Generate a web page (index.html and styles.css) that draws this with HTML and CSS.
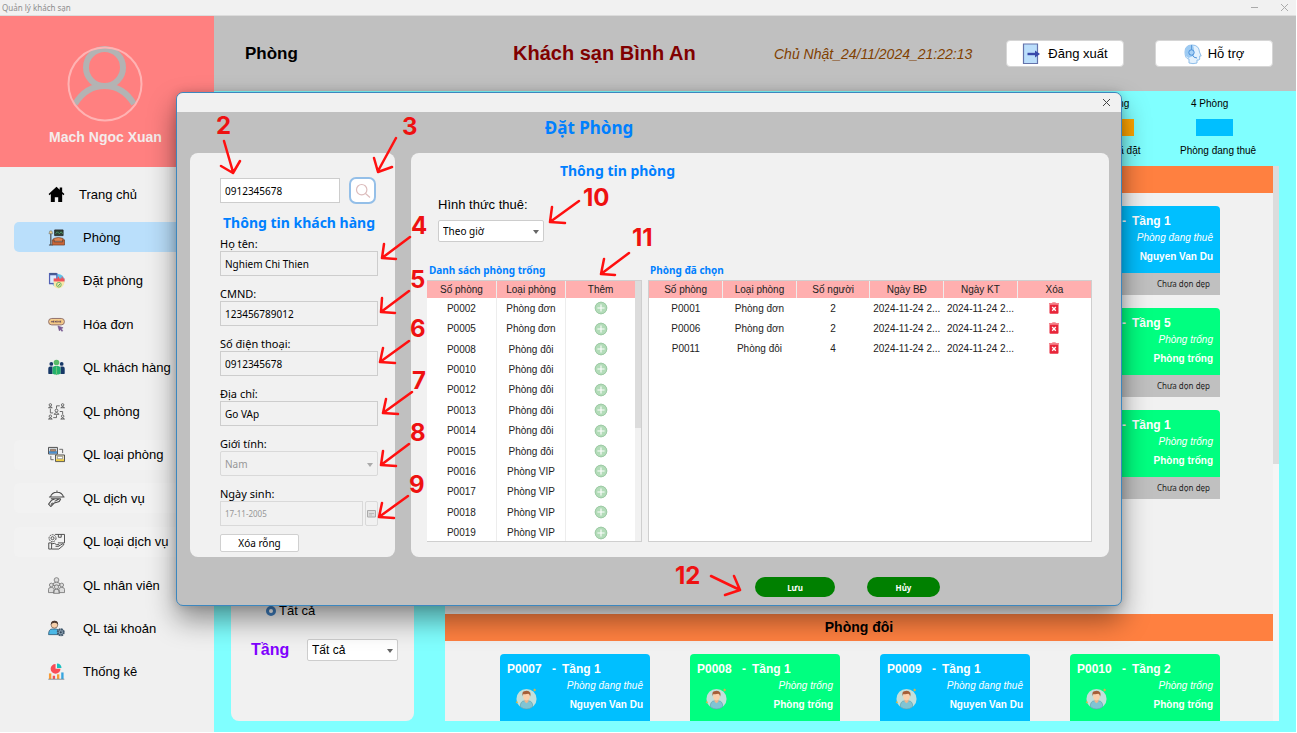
FILE: index.html
```html
<!DOCTYPE html>
<html lang="vi">
<head>
<meta charset="utf-8">
<title>Quản lý khách sạn</title>
<link rel="stylesheet" href="styles.css">
</head>
<body>
<svg class="sprite" aria-hidden="true">
  <symbol id="add" viewBox="0 0 14 14"><circle cx="7" cy="7" r="6.2" fill="#b3dcb9"/><circle cx="7" cy="7" r="5.8" fill="none" stroke="#9fcba6"/><path d="M7 3.4v7.2M3.4 7h7.2" stroke="#fff" stroke-width="1.1"/></symbol>
  <symbol id="trash" viewBox="0 0 10 12"><path d="M.5 2.2h9v8.6q0 .9-.9.9H1.4q-.9 0-.9-.9z" fill="#e8263a"/><path d="M0 1.1h3L3.6.2h2.8l.6.9h3v1.3H0z" fill="#f4808a"/><path d="M3.2 5l3.6 3.8M6.8 5L3.2 8.8" stroke="#fff" stroke-width="1.3"/></symbol>
  <symbol id="guest" viewBox="0 0 24 24"><circle cx="12" cy="12.5" r="10.5" fill="#c2e0dc"/><path d="M5.5 20.5q0-6 4.5-6h4q4.500 0 4.500 6-3 2.500-6.500 2.500t-6.500-2.500z" fill="#7fc4d4" stroke="#5aa0ae" stroke-width=".7"/><path d="M10 12h4v3.500l-2 1.500-2-1.500z" fill="#efb78e"/><ellipse cx="12" cy="9.500" rx="3.500" ry="4.500" fill="#fbd0ac"/><path d="M8 10q-1-5 1.500-5.500Q14 2.800 16 6q.5 2-.2 4-.3-2.500-1.800-3-3 .8-5 .3Q8 8 8 10z" fill="#a65f38"/><path d="M20.500 1.500l1.600 1.600-1.600 1.600-1.600-1.600zM2 14.500l1.300 1.300L2 17.100.7 15.800z" fill="#d8b64a"/></symbol>
</svg>

<div class="app">
  <div class="titlebar">
    <span>Quản lý khách sạn</span>
    <div class="win-buttons">
      <button aria-label="Thu nhỏ"><svg width="9" height="9" viewBox="0 0 9 9"><path d="M1 4.500h7" stroke="#aaa"/></svg></button>
      <button aria-label="Đóng"><svg width="9" height="9" viewBox="0 0 9 9"><path d="M1 1l7 7M8 1L1 8" stroke="#aaa"/></svg></button>
    </div>
  </div>

  <div class="shell">
    <aside class="sidebar">
      <div class="profile">
        <svg width="76" height="76" viewBox="0 0 76 76" fill="none"><g stroke="#b3b3b3" stroke-width="6"><circle cx="37.500" cy="21.500" r="18.500"/><path d="M8 58Q19 40 37.500 40T67 58"/></g><circle cx="38" cy="38" r="36.500" stroke="#ffb3b3" stroke-width="2"/></svg>
        <strong>Mach Ngoc Xuan</strong>
      </div>
      <nav class="menu">
        <a href="#" class="home"><svg viewBox="0 0 18 18"><path d="M9 .8L.6 8.600l1 1.200L3 8.600V17h4.200v-5h3.600v5H15V8.600l1.400 1.200 1-1.200L15 6.300V1.500h-2.600v2.400z"/></svg>Trang chủ</a>
        <a href="#" class="active"><svg viewBox="0 0 18 18"><path d="M7 1h9v6H7z" fill="#2e4237" stroke="#222" stroke-width=".8"/><path d="M8 5l2-2 2 2 2-2 1.500 2" stroke="#54a070" fill="none"/><path d="M1 5l1-3h2l1 3z" fill="#f1d18a" stroke="#555" stroke-width=".5"/><path d="M3 5v12M1 17h4" stroke="#444" stroke-width="1.200"/><path d="M6 10q5-2 10 0v3H6z" fill="#e08450" stroke="#693b25" stroke-width=".7"/><path d="M4.500 11.500h2v2.200h9v-2.200h2V17h-13z" fill="#c96537" stroke="#693b25" stroke-width=".7"/></svg>Phòng</a>
        <a href="#"><svg viewBox="0 0 18 18"><circle cx="10.500" cy="9" r="7" fill="#5fc4ea"/><path d="M1 1h9v12H1z" fill="#5361b5"/><path d="M2.300 3.500h6.400v8H2.300z" fill="#dcebff"/><path d="M2 1h7v2H2z" fill="#46598f"/><path d="M6 9h11.500q0 7.500-6.500 8.500-5-1-5-4z" fill="#f9e7a7"/><path d="M6 6.800h11.500V10H6z" fill="#f0525b"/><path d="M11 5v3m4-3v3" stroke="#f0525b" stroke-width="1.300"/><circle cx="11.500" cy="13.500" r="2.500" fill="none" stroke="#66b66b"/><path d="M10.500 13.500l.8.9 1.500-1.800" stroke="#499c50" fill="none"/></svg>Đặt phòng</a>
        <a href="#"><svg viewBox="0 0 18 18"><rect x=".6" y="2.600" width="16.800" height="6.800" rx="3.400" fill="#f6cf91" stroke="#8c6b68"/><rect x="2.500" y="4.200" width="13" height="3.600" rx="1.800" fill="#eabd79"/><path d="M3.500 6h1.500m1-1v2m1.500-1h1m1-1v2m1.500-1h1m1-1v2" stroke="#5f4a60" stroke-width="1.200"/><path d="M10.500 10.500l5.500 2-2 .9 1.700 2.100-1 .8-1.700-2.100-1 1.600z" fill="#7a5a9b" stroke="#684a80" stroke-width=".5"/></svg>Hóa đơn</a>
        <a href="#"><svg viewBox="0 0 18 18"><g fill="#173867"><circle cx="3.500" cy="5.200" r="2"/><circle cx="14.500" cy="5.200" r="2"/><path d="M.3 15V10q0-2 2-2h2.500v8H1.500q-1.200 0-1.200-1zM17.700 15V10q0-2-2-2h-2.500v8h3.300q1.200 0 1.200-1z"/></g><circle cx="9" cy="3.700" r="3" fill="#59bb68"/><path d="M4.800 15.500V10q0-2.700 2.800-2.700h2.800q2.800 0 2.800 2.700v5.500q-4.200 2-8.400 0z" fill="#24b06c"/><path d="M9 8v9" stroke="#65c574" stroke-width="1.200"/></svg>QL khách hàng</a>
        <a href="#"><svg viewBox="0 0 18 18" fill="none" stroke="#555" stroke-width=".9"><circle cx="2.500" cy="2" r="1.300"/><path d="M.5 5q2-2.500 4 0z"/><circle cx="15.500" cy="2" r="1.300"/><path d="M13.500 5q2-2.500 4 0z"/><circle cx="9" cy="8" r="1.500"/><path d="M6.500 12q2.500-4 5 0z"/><circle cx="2.500" cy="14" r="1.300"/><path d="M.5 17q2-2.500 4 0z"/><circle cx="15.500" cy="14" r="1.300"/><path d="M13.500 17q2-2.500 4 0zM2.500 6v4.500h3M12.500 3H9v3M15.500 12V9h-3M5.500 15.500H9V13"/></svg>QL phòng</a>
        <a href="#" class="soft"><svg viewBox="0 0 18 18"><path d="M.5 1.500h9.500v7H.5z" fill="#dbe1e5" stroke="#4a4a4a"/><path d="M1 5.500h8.500V8H1z" fill="#4b8fd0"/><path d="M2.500 3.500h5.500v2H2.500z" fill="#c6906c" stroke="#444" stroke-width=".5"/><path d="M8 9.500h9.500v7H8z" fill="#f2e9c8" stroke="#4a4a4a"/><path d="M8.500 14h8.500v2H8.500z" fill="#f0ce42"/><path d="M10 11h5.500v2.500H10z" fill="#fff" stroke="#444" stroke-width=".5"/><path d="M12 3.500h3.500v4M3 10.500v4h3" fill="none" stroke="#555" stroke-width=".9"/></svg>QL loại phòng</a>
        <a href="#" class="soft"><svg viewBox="0 0 18 18" fill="none" stroke="#4a4a4a" stroke-width="1.100"><path d="M2.500 7.500Q4 2.300 9.500 2.300T16.500 7.500M1 7.500h16.500M9.500 2V.6M3 9.300h10.500M13.500 9.500q-1 3-4 3.500l-3 .8L3 17.500.6 15l3-4 3.400-1.500M7 12l4.500-2.500M3 15.500l2-2"/></svg>QL dịch vụ</a>
        <a href="#" class="soft"><svg viewBox="0 0 18 18" fill="none" stroke="#4a4a4a"><path d="M7.500 1.500h10v9h-7M11 1.500v3h3v-3"/><circle cx="4.800" cy="5.500" r="3.700" stroke-dasharray="2 .7"/><circle cx="4.800" cy="5.500" r="1.600"/><path d="M.8 10.500h3v6.500h-3zM4 11.500q3-1.500 5 .8h2.500q1 1-.2 1.800H8m3.500-.3l4.300-2.500q1.500.4.700 1.500L11.500 17H4"/></svg>QL loại dịch vụ</a>
        <a href="#"><svg viewBox="0 0 18 18" fill="#ddd" stroke="#777" stroke-width=".9"><circle cx="9" cy="3.200" r="2.500"/><path d="M5 9q0-3.500 4-3.500T13 9z"/><circle cx="3.500" cy="8.500" r="2"/><circle cx="14.500" cy="8.500" r="2"/><circle cx="9" cy="10.500" r="2.200"/><path d="M.5 16.500V13q0-2 3-2t3 2v3.500zM11.500 16.500V13q0-2 3-2t3 2v3.500zM5.800 17.300v-2q0-2.300 3.200-2.300t3.200 2.300v2z"/></svg>QL nhân viên</a>
        <a href="#"><svg viewBox="0 0 18 18"><path d="M.6 15.500q0-6 4-6h4q3.500 0 4 4v2z" fill="#4cb8e6" stroke="#2a536e" stroke-width=".8"/><circle cx="6.800" cy="5" r="3.600" fill="#f6cfaa" stroke="#514036" stroke-width=".6"/><path d="M3 5Q3 .7 7 .8T10.600 5Q9.500 2.800 7 2.800T3 5z" fill="#4d3a31"/><circle cx="13.500" cy="13" r="3.200" fill="#93a7b7" stroke="#40576b" stroke-width="2" stroke-dasharray="1.900 .6"/><circle cx="13.500" cy="13" r="1.200" fill="#33475a"/></svg>QL tài khoản</a>
        <a href="#"><svg viewBox="0 0 18 18"><path d="M8 1a5.200 5.200 0 1 0 5.200 5.200H8z" fill="#fa4c56"/><path d="M9.500.5a5 5 0 0 1 4.800 4.800H9.500z" fill="#1bc0c0"/><path d="M1 11h2.500v6H1z" fill="#f99b35"/><path d="M5 13.500h2.500V17H5z" fill="#f25058"/><path d="M9.500 12H12v5H9.500z" fill="#f99b35"/><path d="M14 10h2.500v7H14z" fill="#37a5df"/><path d="M.3 17.200h17" stroke="#7c8790" stroke-width=".9"/></svg>Thống kê</a>
      </nav>
    </aside>

    <main class="main">
      <header class="header">
        <h1>Phòng</h1>
        <p class="hotel">Khách sạn Bình An</p>
        <time>Chủ Nhật_24/11/2024_21:22:13</time>
        <div class="account">
          <button class="hbtn"><svg width="20" height="22" viewBox="0 0 20 22"><path d="M1.500 1h14v19.500h-14z" fill="#bbdefb" stroke="#6473ab" stroke-width="1.200"/><path d="M5.500 11h9" stroke="#3949ab" stroke-width="2.400"/><path d="M13 7.500l5 3.500-5 3.500z" fill="#3949ab"/></svg>Đăng xuất</button>
          <button class="hbtn"><svg width="18" height="22" viewBox="0 0 18 22"><path d="M8 2Q1 2 1 9t4 7v4q4 1.300 8 0v-3h2q1-.5.700-2V13h1.500L15.500 9Q15 2 8 2z" fill="#e3f1fd" stroke="#84b8e8" stroke-width=".9"/><path d="M8 2Q1 2 1 9.500q.5 4 3.500 5.500L9 13q2-5 0-11z" fill="#9dcbf3"/><path d="M7.500 2v6" stroke="#5e9ddc"/><circle cx="7.500" cy="9.500" r="2.700" fill="#a8d1f6" stroke="#4a90d9"/><path d="M8.500 12q1 3 4.500 3" stroke="#4a90d9" fill="none"/></svg>Hỗ trợ</button>
        </div>
      </header>

      <div class="workspace">
        <section class="filters">
          <label class="radio"><input type="radio" name="status" checked>Tất cả</label>
          <div class="floor">
            <label for="floor">Tầng</label>
            <span class="select"><select id="floor"><option>Tất cả</option></select></span>
          </div>
        </section>

        <section class="rooms">
          <div class="legend">
            <div><span class="count">1 Phòng</span><i class="booked"></i><span>Phòng đã đặt</span></div>
            <div><span class="count">4 Phòng</span><i class="rented"></i><span>Phòng đang thuê</span></div>
          </div>
          <div class="viewport">
            <div class="groups">
              <div class="group-bar"></div>
              <div class="cards first">
                <article class="card busy"><div class="face"><h3><b></b><span>-</span>Tầng 1</h3><em>Phòng đang thuê</em><strong>Nguyen Van Du</strong></div><footer>Chưa dọn dẹp</footer></article>
                <article class="card"><div class="face"><h3><b></b><span>-</span>Tầng 5</h3><em>Phòng trống</em><strong>Phòng trống</strong></div><footer>Chưa dọn dẹp</footer></article>
                <article class="card"><div class="face"><h3><b></b><span>-</span>Tầng 1</h3><em>Phòng trống</em><strong>Phòng trống</strong></div><footer>Chưa dọn dẹp</footer></article>
              </div>
              <h2 class="group-bar">Phòng đôi</h2>
              <div class="cards">
                <article class="card busy"><div class="face"><h3><b>P0007</b><span>-</span>Tầng 1</h3><svg class="guest"><use href="#guest"/></svg><em>Phòng đang thuê</em><strong>Nguyen Van Du</strong></div><footer></footer></article>
                <article class="card"><div class="face"><h3><b>P0008</b><span>-</span>Tầng 1</h3><svg class="guest"><use href="#guest"/></svg><em>Phòng trống</em><strong>Phòng trống</strong></div><footer></footer></article>
                <article class="card busy"><div class="face"><h3><b>P0009</b><span>-</span>Tầng 1</h3><svg class="guest"><use href="#guest"/></svg><em>Phòng đang thuê</em><strong>Nguyen Van Du</strong></div><footer></footer></article>
                <article class="card"><div class="face"><h3><b>P0010</b><span>-</span>Tầng 2</h3><svg class="guest"><use href="#guest"/></svg><em>Phòng trống</em><strong>Phòng trống</strong></div><footer></footer></article>
              </div>
            </div>
            <div class="track"><div class="thumb"></div></div>
          </div>
        </section>
      </div>
    </main>
  </div>
</div>

<div class="dialog" role="dialog" aria-labelledby="dlg-title">
  <div class="dialog-bar"><button aria-label="Đóng hộp thoại"><svg width="9" height="9" viewBox="0 0 9 9"><path d="M1 1l7 7M8 1L1 8" stroke="#444"/></svg></button></div>
  <h2 id="dlg-title">Đặt Phòng</h2>
  <div class="dialog-body">
    <form class="panel customer">
      <div class="search">
        <input type="text" value="0912345678" aria-label="Tìm khách hàng">
        <button type="button" aria-label="Tìm"><svg width="16" height="16" viewBox="0 0 16 16" fill="none" stroke="#dcbcbc" stroke-width="1.200"><circle cx="6.700" cy="6.700" r="5.200"/><path d="M10.500 10.500l4.500 4"/></svg></button>
      </div>
      <h3>Thông tin khách hàng</h3>
      <div class="field"><label for="name">Họ tên:</label><input id="name" type="text" value="Nghiem Chi Thien" readonly></div>
      <div class="field"><label for="idno">CMND:</label><input id="idno" type="text" value="123456789012" readonly></div>
      <div class="field"><label for="phone">Số điện thoại:</label><input id="phone" type="text" value="0912345678" readonly></div>
      <div class="field"><label for="addr">Địa chỉ:</label><input id="addr" type="text" value="Go VAp" readonly></div>
      <div class="field"><label for="sex">Giới tính:</label><span class="select off"><select id="sex" disabled><option>Nam</option></select></span></div>
      <div class="field"><label for="dob">Ngày sinh:</label>
        <div class="date"><input id="dob" type="text" value="17-11-2005" disabled><button type="button" disabled aria-label="Chọn ngày"><svg width="9" height="8" viewBox="0 0 9 8"><path d="M.5.5h8v6.500h-8z" fill="#ddd" stroke="#aaa"/><path d="M2 3.500h5M2 5h3" stroke="#bbb"/></svg></button></div></div>
      <button type="button" class="clear">Xóa rỗng</button>
    </form>

    <section class="panel booking">
      <h3>Thông tin phòng</h3>
      <div class="rent">
        <label for="rent">Hình thức thuê:</label>
        <span class="select"><select id="rent"><option>Theo giờ</option></select></span>
      </div>
      <div class="tables">
        <div class="tbl">
          <h4>Danh sách phòng trống</h4>
          <div class="frame">
            <table class="free">
              <thead><tr><th>Số phòng</th><th>Loại phòng</th><th>Thêm</th></tr></thead>
              <tbody>
                <tr><td>P0002</td><td>Phòng đơn</td><td><svg><use href="#add"/></svg></td></tr>
                <tr><td>P0005</td><td>Phòng đơn</td><td><svg><use href="#add"/></svg></td></tr>
                <tr><td>P0008</td><td>Phòng đôi</td><td><svg><use href="#add"/></svg></td></tr>
                <tr><td>P0010</td><td>Phòng đôi</td><td><svg><use href="#add"/></svg></td></tr>
                <tr><td>P0012</td><td>Phòng đôi</td><td><svg><use href="#add"/></svg></td></tr>
                <tr><td>P0013</td><td>Phòng đôi</td><td><svg><use href="#add"/></svg></td></tr>
                <tr><td>P0014</td><td>Phòng đôi</td><td><svg><use href="#add"/></svg></td></tr>
                <tr><td>P0015</td><td>Phòng đôi</td><td><svg><use href="#add"/></svg></td></tr>
                <tr><td>P0016</td><td>Phòng VIP</td><td><svg><use href="#add"/></svg></td></tr>
                <tr><td>P0017</td><td>Phòng VIP</td><td><svg><use href="#add"/></svg></td></tr>
                <tr><td>P0018</td><td>Phòng VIP</td><td><svg><use href="#add"/></svg></td></tr>
                <tr><td>P0019</td><td>Phòng VIP</td><td><svg><use href="#add"/></svg></td></tr>
              </tbody>
            </table>
            <div class="track"><div class="thumb"></div></div>
          </div>
        </div>
        <div class="tbl">
          <h4>Phòng đã chọn</h4>
          <div class="frame">
            <table class="picked">
              <thead><tr><th>Số phòng</th><th>Loại phòng</th><th>Số người</th><th>Ngày BĐ</th><th>Ngày KT</th><th>Xóa</th></tr></thead>
              <tbody>
                <tr><td>P0001</td><td>Phòng đơn</td><td>2</td><td>2024-11-24 2...</td><td>2024-11-24 2...</td><td><svg><use href="#trash"/></svg></td></tr>
                <tr><td>P0006</td><td>Phòng đơn</td><td>2</td><td>2024-11-24 2...</td><td>2024-11-24 2...</td><td><svg><use href="#trash"/></svg></td></tr>
                <tr><td>P0011</td><td>Phòng đôi</td><td>4</td><td>2024-11-24 2...</td><td>2024-11-24 2...</td><td><svg><use href="#trash"/></svg></td></tr>
              </tbody>
            </table>
          </div>
        </div>
      </div>
    </section>
  </div>
  <div class="actions"><button class="save">Lưu</button><button>Hủy</button></div>
</div>

<svg class="notes" width="1297" height="733" viewBox="0 0 1297 733">
  <g>
    <text x="216" y="134">2</text><text x="402" y="135">3</text><text x="411" y="234">4</text><text x="410" y="288">5</text>
    <text x="410" y="337">6</text><text x="412" y="389">7</text><text x="410" y="441">8</text><text x="409" y="493">9</text>
    <text x="583" y="206">10</text><text x="632" y="246">11</text><text x="675" y="584">12</text>
  </g>
  <path d="M224 141L233 172M221 166L233 173L240 161M396 138L378 171M374 158L378 172L392 167M410 237L382 258M384 244L382 258L396 259M409 291L381 312M382 298L381 312L395 313M409 341L380 362M383 348L380 362L395 363M412 392L383 413M386 399L383 413L398 414M409 444L381 465M383 451L381 465L396 466M408 496L379 517M382 503L379 517L394 518M579 201L550 222M552 207L550 222L565 223M629 253L601 274M604 259L601 274L615 275M711 576L740 590M734 576L740 590L725 595"/>
</svg>
</body>
</html>
```
FILE: styles.css
```css
* { box-sizing: border-box; }
body {
  margin: 0;
  position: relative;
  background: #fff;
  color: #000;
  font: 13px "Liberation Sans", Arial, sans-serif;
  overflow: hidden;
}
h1, h2, h3, h4, p { margin: 0; }
button, input, select { font: inherit; color: inherit; margin: 0; }
button { padding: 0; border: 0; background: none; }
a { color: inherit; text-decoration: none; }
.sprite { position: absolute; width: 0; height: 0; }

.app { height: 100vh; padding: 0 1px 1px 0; display: flex; flex-direction: column; }
.titlebar {
  height: 16px; flex: none; padding: 0 7px 0 2px;
  display: flex; align-items: center; justify-content: space-between;
  background: #f1f1f1; border-bottom: 1px solid #dcdcdc;
  color: #8d8d8d; font: 8px "Noto Sans", sans-serif;
}
.win-buttons { display: flex; gap: 21px; }
.win-buttons button { display: flex; }
.shell { flex: 1; min-height: 0; display: flex; }

.sidebar { width: 214px; flex: none; background: #f0f0f0; }
.profile {
  height: 151px; padding: 30px 0 0; background: #ff8080;
  display: flex; flex-direction: column; align-items: center; gap: 6px;
}
.profile svg { margin-right: 5px; }
.profile strong { color: #f4ecec; font-size: 14px; line-height: 18px; margin-right: 3px; }
.menu { height: 508px; margin: 12px 14px 0; display: flex; flex-direction: column; justify-content: space-between; }
.menu a { height: 30px; padding-left: 34px; border-radius: 5px; display: flex; align-items: center; gap: 18px; }
.menu svg { width: 17px; height: 17px; flex: none; }
.menu .home { gap: 14px; }
.menu .active { background: #badffb; }
.menu .soft { background: #f2f2f2; }

.main { flex: 1; min-width: 0; display: flex; flex-direction: column; background: #80ffff; }
.header {
  height: 75px; flex: none; padding: 0 23px 0 31px; background: #c0c0c0;
  display: grid; grid-template-columns: 268px 261px 1fr auto; align-items: center;
}
.header h1 { font-size: 17px; }
.header .hotel { color: #800000; font-size: 20px; font-weight: bold; }
.header time { color: #804000; font-size: 14px; font-style: italic; }
.account { display: flex; gap: 31px; }
.hbtn {
  width: 118px; height: 27px; border-radius: 4px; background: #fff; border: 1px solid #d6d6d6;
  display: flex; align-items: center; justify-content: center; gap: 6px;
}

.workspace { flex: 1; min-height: 0; padding: 0 17px 11px; display: flex; gap: 31px; }
.filters {
  width: 183px; flex: none; margin-top: 10px; padding: 0 16px 60px 20px;
  background: #f1f1f1; border-radius: 8px;
  display: flex; flex-direction: column; justify-content: flex-end; gap: 19px;
}
.radio { display: flex; align-items: center; gap: 3px; padding-left: 15px; line-height: 18px; }
.radio input { appearance: none; width: 10px; height: 10px; border: 3px solid #3f7fc0; border-radius: 50%; background: #fff; }
.floor { display: flex; align-items: center; justify-content: space-between; }
.floor label { color: #8000ff; font-size: 16px; font-weight: bold; }
.floor .select { width: 91px; font-size: 12px; }

.select { position: relative; display: block; height: 22px; }
.select select {
  appearance: none; width: 100%; height: 100%; padding: 0 4px;
  border: 1px solid #cdcdcd; border-radius: 2px; background: #fff; opacity: 1;
}
.select::after {
  content: ""; position: absolute; right: 5px; top: 50%; margin-top: -1px;
  border: 3px solid transparent; border-top: 4px solid #666; border-bottom: 0;
}
.select.off { height: 25px; color: #979797; }
.select.off select { background: #f1f1f1; border-color: #d9d9d9; }
.select.off::after { border-top-color: #aaa; }

.rooms { flex: 1; min-width: 0; display: flex; flex-direction: column; }
.legend { height: 75px; flex: none; display: flex; justify-content: flex-end; font-size: 10px; }
.legend div { width: 99px; padding-top: 7px; display: flex; flex-direction: column; align-items: flex-start; gap: 9px; line-height: 12px; }
.legend i { width: 37px; height: 17px; margin-left: 16px; }
.legend .count { margin-left: 11px; }
.booked { background: #ffa500; }
.rented { background: #00bfff; }
.viewport { flex: 1; min-height: 0; display: flex; overflow: hidden; background: #f1f1f1; }
.groups { flex: 1; min-width: 0; }
.group-bar { height: 27px; background: #ff8040; font-size: 14px; line-height: 27px; text-align: center; }
.cards { padding: 13px 53px 0 55px; display: grid; grid-template-columns: repeat(4, 1fr); gap: 13px 40px; }
.cards.first { padding-bottom: 115px; }
.first .card { grid-column: 4; }
.face {
  position: relative; height: 67px; padding: 6px 7px 0; border-radius: 4px 4px 0 0;
  background: #00ff80; color: #fff;
  display: flex; flex-direction: column; align-items: flex-end; font-size: 10px;
}
.busy .face { background: #00bfff; }
.face h3 { align-self: stretch; display: flex; font-size: 12px; line-height: 18px; }
.face h3 b { width: 45px; }
.face h3 span { width: 10px; }
.face em { line-height: 15px; margin-bottom: 5px; }
.face strong { line-height: 14px; }
.guest { position: absolute; left: 15px; top: 33px; width: 23px; height: 23px; }
.card footer {
  height: 22px; padding-right: 10px; background: #c0c0c0; color: #222;
  font: 8px/22px "Noto Sans", sans-serif; text-align: right;
}
.track { width: 6px; flex: none; background: #f5f5f5; }
.thumb { background: #dcdcdc; height: 298px; }

.dialog {
  position: absolute; left: 176px; right: 175px; top: 92px;
  border: 1px solid #3c87bf; border-radius: 7px; background: #c0c0c0; overflow: hidden;
  box-shadow: 0 14px 28px rgba(0, 0, 0, .42), 0 0 10px rgba(0, 0, 0, .15);
  font-family: "Noto Sans", sans-serif;
}
.dialog-bar { height: 19px; padding-right: 10px; background: #f1f1f1; display: flex; align-items: center; justify-content: flex-end; }
.dialog-bar button { display: flex; }
.dialog h2, .dialog h3, .dialog h4 { color: #0080ff; }
.dialog h2 { padding-right: 120px; font-size: 17px; line-height: 32px; text-align: center; }
.dialog-body { margin-top: 9px; padding: 0 12px 0 13px; display: flex; gap: 16px; }
.panel { background: #f1f1f1; border-radius: 8px; height: 404px; }
.customer { width: 205px; flex: none; padding: 24px 17px 0 30px; font-size: 10px; }
.search { display: flex; align-items: center; gap: 9px; }
.customer input {
  width: 100%; height: 25px; padding: 0 4px; display: block;
  border: 1px solid #cdcdcd; border-radius: 0; background: #f1f1f1; outline: 0;
}
.customer .search input { width: 120px; background: #fff; }
.search button {
  width: 27px; height: 27px; border: 2px solid #94bfe8; border-radius: 7px; background: #fff;
  display: flex; align-items: center; justify-content: center;
}
.customer h3 { padding-top: 8px; font-size: 14px; line-height: 22px; text-align: center; white-space: nowrap; }
.field { margin-bottom: 8px; }
.field label { display: block; padding-top: 2px; font-size: 11px; line-height: 15px; }
.date { display: flex; gap: 2px; }
.customer .date input { width: 143px; color: #979797; border-color: #d9d9d9; font-size: 8px; }
.date button { width: 13px; border: 1px solid #d9d9d9; border-radius: 2px; display: flex; align-items: center; justify-content: center; }
.clear { width: 79px; height: 18px; border: 1px solid #d0d0d0; border-radius: 2px; background: #fff; font-size: 10px; line-height: 16px; }

.booking { flex: 1; min-width: 0; padding: 8px 17px 0 16px; }
.booking h3 { padding-right: 284px; font-size: 14px; line-height: 20px; text-align: center; }
.rent { padding: 15px 11px 0; font: 13px "Liberation Sans", sans-serif; }
.rent label { line-height: 18px; }
.rent .select { width: 106px; margin-top: 6px; font: 10px "Noto Sans", sans-serif; }
.tables { margin-top: 19px; display: grid; grid-template-columns: 215px 1fr; gap: 6px; }
.tbl h4 { padding-left: 2px; font-size: 10px; line-height: 19px; }
.frame { height: 262px; display: flex; align-items: flex-start; overflow: hidden; background: #fff; border: 1px solid #cfcfcf; border-left-width: 0; }
.tbl + .tbl .frame { border-left-width: 1px; }
table { flex: 1; width: 100%; border-collapse: collapse; table-layout: fixed; font: 10px "Liberation Sans", sans-serif; color: #222; }
.free { height: 262px; }
.frame .track { align-self: stretch; background: #f1f1f1; }
.frame .thumb { height: 147px; }
th, td { padding: 0; text-align: center; font-weight: normal; white-space: nowrap; }
th { height: 17px; background: #ffafaf; }
th + th, .free td + td { border-left: 1px solid #ededed; }
.picked td { height: 20px; }
td svg { width: 14px; height: 14px; display: block; margin: 0 auto; }
.picked td svg { width: 10px; height: 12px; }

.actions { padding: 20px 0 8px 578px; display: flex; gap: 32px; }
.actions button { width: 73px; height: 20px; border-radius: 10px; background: #008000; color: #fff; font-size: 8px; font-weight: bold; }
.actions .save { width: 80px; }

.notes { position: absolute; left: 0; top: 0; pointer-events: none; }
.notes text { fill: #ee1111; font: bold 24px Inter, sans-serif; }
.notes path { fill: none; stroke: #ff1010; stroke-width: 2.500; stroke-linecap: round; stroke-linejoin: round; }
```
